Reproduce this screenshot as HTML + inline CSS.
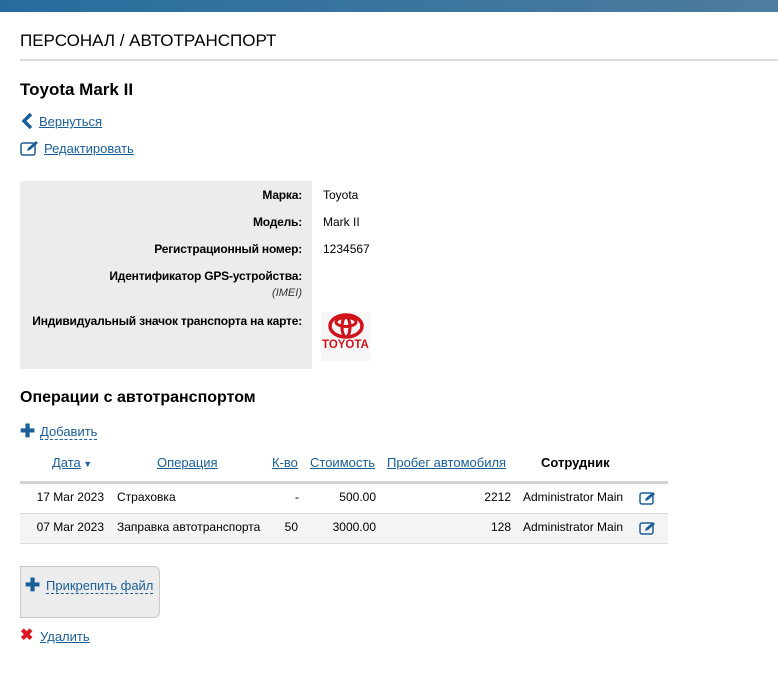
<!DOCTYPE html>
<html><head><meta charset="utf-8"><style>
body{margin:0;width:778px;height:677px;background:#fff;font-family:"Liberation Sans",sans-serif;color:#000;position:relative;overflow:hidden}
.a{position:absolute;white-space:nowrap}
a{color:#1a5f97;text-decoration:underline}
.top{position:absolute;left:0;top:0;width:778px;height:12px;background:linear-gradient(90deg,#266d9e,#4d7c9e)}
.lbl{font-size:12px;font-weight:bold;text-align:right;right:476px;letter-spacing:-0.2px}
.val{font-size:12px;left:323px}
.th{font-size:13px;top:455px}
.td{font-size:12px}
.dash{text-decoration:none;border-bottom:1px dashed #1a5f97}
</style></head><body>
<div class="top"></div>
<div class="a" style="left:20px;top:31px;font-size:17px">ПЕРСОНАЛ / АВТОТРАНСПОРТ</div>
<div class="a" style="left:20px;top:59px;width:758px;height:2px;background:#dcdcdc"></div>
<div class="a" style="left:20px;top:80px;font-size:17px;font-weight:bold">Toyota Mark II</div>
<svg class="a" style="left:21px;top:113px" width="12" height="16"><path d="M10 1L3 8l7 7" stroke="#1a5f97" stroke-width="3.5" fill="none"/></svg>
<div class="a" style="left:39px;top:114px;font-size:13px"><a>Вернуться</a></div>
<svg class="a" style="left:20px;top:140px" width="20" height="16"><rect x="1" y="3" width="14" height="12" rx="2" fill="none" stroke="#1a5f97" stroke-width="1.5"/><path d="M7 11l1-3 8-7 2 2-8 7z" fill="#1a5f97"/></svg>
<div class="a" style="left:44px;top:141px;font-size:13px"><a>Редактировать</a></div>
<div class="a" style="left:20px;top:181px;width:292px;height:188px;background:#ececec"></div>
<div class="a lbl" style="top:188px">Марка:</div><div class="a val" style="top:188px">Toyota</div>
<div class="a lbl" style="top:215px">Модель:</div><div class="a val" style="top:215px">Mark II</div>
<div class="a lbl" style="top:242px">Регистрационный номер:</div><div class="a val" style="top:242px">1234567</div>
<div class="a lbl" style="top:269px">Идентификатор GPS-устройства:</div>
<div class="a" style="right:476px;top:287px;font-size:11px;font-style:italic;color:#333">(IMEI)</div>
<div class="a lbl" style="top:314px">Индивидуальный значок транспорта на карте:</div>
<div class="a" style="left:321px;top:312px;width:49px;height:49px;background:#f6f6f6"></div>
<svg class="a" style="left:327px;top:313px" width="38" height="26"><ellipse cx="19" cy="13" rx="16" ry="11" fill="none" stroke="#d0121b" stroke-width="3.5"/><ellipse cx="19" cy="9" rx="10" ry="4.5" fill="none" stroke="#d0121b" stroke-width="3"/><ellipse cx="19" cy="14" rx="4" ry="10" fill="none" stroke="#d0121b" stroke-width="3"/></svg>
<div class="a" style="left:322px;top:339px;font-size:11.5px;font-weight:bold;color:#d0121b">TOYOTA</div>
<div class="a" style="left:20px;top:389px;font-size:16px;font-weight:bold">Операции с автотранспортом</div>
<div class="a" style="left:20px;top:423px;font-size:18px;font-weight:bold;color:#1a5f97;line-height:16px">✚</div>
<div class="a" style="left:40px;top:424px;font-size:13px"><a class="dash">Добавить</a></div>
<div class="a th" style="left:52px"><a>Дата</a><span style="color:#1a5f97;font-size:9px"> ▼</span></div>
<div class="a th" style="left:157px"><a>Операция</a></div>
<div class="a th" style="left:272px"><a>К-во</a></div>
<div class="a th" style="left:310px"><a>Стоимость</a></div>
<div class="a th" style="left:387px"><a>Пробег автомобиля</a></div>
<div class="a th" style="left:541px;font-weight:bold">Сотрудник</div>
<div class="a" style="left:20px;top:481px;width:648px;height:3px;background:#d3d3d3"></div>
<div class="a" style="left:20px;top:513px;width:648px;height:1px;background:#ddd"></div>
<div class="a" style="left:20px;top:514px;width:648px;height:29px;background:#f4f4f4;border-bottom:1px solid #ddd"></div>
<div class="a td" style="right:674px;top:490px">17 Mar 2023</div>
<div class="a td" style="left:117px;top:490px">Страховка</div>
<div class="a td" style="right:479px;top:490px">-</div>
<div class="a td" style="right:402px;top:490px">500.00</div>
<div class="a td" style="right:267px;top:490px">2212</div>
<div class="a td" style="left:523px;top:490px">Administrator Main</div>
<div class="a td" style="right:674px;top:520px">07 Mar 2023</div>
<div class="a td" style="left:117px;top:520px">Заправка автотранспорта</div>
<div class="a td" style="right:480px;top:520px">50</div>
<div class="a td" style="right:402px;top:520px">3000.00</div>
<div class="a td" style="right:267px;top:520px">128</div>
<div class="a td" style="left:523px;top:520px">Administrator Main</div>
<svg class="a" style="left:639px;top:490px" width="18" height="16"><rect x="1" y="3" width="13" height="11" rx="2" fill="none" stroke="#1a5f97" stroke-width="1.5"/><path d="M6 11l1-3 7-6 2 2-7 6z" fill="#1a5f97"/></svg>
<svg class="a" style="left:639px;top:520px" width="18" height="16"><rect x="1" y="3" width="13" height="11" rx="2" fill="none" stroke="#1a5f97" stroke-width="1.5"/><path d="M6 11l1-3 7-6 2 2-7 6z" fill="#1a5f97"/></svg>
<div class="a" style="left:20px;top:566px;width:138px;height:50px;background:#ececec;border:1px solid #c8c8c8;border-radius:0 6px 6px 0"></div>
<div class="a" style="left:25px;top:577px;font-size:18px;font-weight:bold;color:#1a5f97;line-height:16px">✚</div>
<div class="a" style="left:46px;top:578px;font-size:13px"><a class="dash">Прикрепить файл</a></div>
<div class="a" style="left:20px;top:628px;font-size:16px;font-weight:bold;color:#e0141e;line-height:16px">✖</div>
<div class="a" style="left:40px;top:629px;font-size:13px"><a>Удалить</a></div>
</body></html>
